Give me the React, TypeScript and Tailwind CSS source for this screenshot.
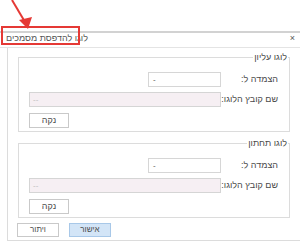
import React from "react";

const LogoGroup: React.FC<{ title: string; className?: string }> = ({ title, className }) => {
  return (
    <div className={`relative ml-[10px] w-[272px] border border-[#dcdcdc] pt-[14px] pb-[3px] pl-[10px] ${className ?? ""}`}>
      <span dir="rtl" className="absolute right-[1px] top-[-7px] bg-white px-[1px] text-[9px] leading-[12px] text-[#4a4a4a]">
        {title}
      </span>
      <div className="flex items-center h-[15px]">
        <div className="flex w-[192px] justify-end">
          <div className="flex h-[15px] w-[73px] items-center border border-[#d6d6d6] bg-white pl-[4px] text-[8px] leading-none text-[#555]">
            -
          </div>
        </div>
        <span dir="rtl" className="flex-1 pr-[11px] text-right text-[9px] text-[#4a4a4a]">
          הצמדה ל:
        </span>
      </div>
      <div className="mt-[5px] flex items-center h-[15px]">
        <div className="flex h-[15px] w-[192px] items-center border border-[#d5d5d5] bg-[#f6eff3] pl-[3px] text-[8px] leading-none text-[#bdbdbd]">
          --
        </div>
        <span dir="rtl" className="flex-1 pr-[11px] text-right text-[9px] text-[#4a4a4a]">
          שם קובץ הלוגו:
        </span>
      </div>
      <button
        type="button"
        className="mt-[6px] flex h-[15px] w-[40px] items-center justify-center border border-[#c9c9c9] bg-white text-[9px] leading-none text-[#4a4a4a]"
      >
        נקה
      </button>
    </div>
  );
};

const App: React.FC = () => {
  return (
    <div
      className="relative h-[242px] w-[300px] overflow-hidden bg-white"
      style={{ fontFamily: '"Liberation Sans", "DejaVu Sans", sans-serif' }}
    >
      <div className="h-[31px]" />
      <div className="border-t-2 border-[#d2d2d2]">
        {/* title bar */}
        <div className="flex h-[15px] items-start justify-between border-b border-[#e4e4e4] pt-[1px] pl-[6px] pr-[5px]">
          <span dir="rtl" className="text-[9px] leading-[9px] text-[#555]">
            לוגו להדפסת מסמכים
          </span>
          <span className="text-[9px] leading-[9px] text-[#555]">×</span>
        </div>
        {/* body */}
        <div className="ml-[7px] border-b border-l border-[#dcdcdc] pt-[9px] pb-[3px]">
          <LogoGroup title="לוגו עליון" />
          <LogoGroup title="לוגו תחתון" className="mt-[11px]" />
          <div className="mt-[5px] ml-[9px] flex gap-[10px]">
            <button
              type="button"
              className="flex h-[14px] w-[42px] items-center justify-center border border-[#c9c9c9] bg-white text-[8px] leading-none text-[#4a4a4a]"
            >
              ויתור
            </button>
            <button
              type="button"
              className="flex h-[14px] w-[42px] items-center justify-center border border-[#a8c8e8] bg-[#d3e5f7] text-[8px] leading-none text-[#4a4a4a]"
            >
              אישור
            </button>
          </div>
        </div>
      </div>

      {/* annotation: red arrow and highlight box */}
      <svg className="absolute left-0 top-0" width="40" height="32" viewBox="0 0 40 32">
        <line x1="12" y1="0" x2="25" y2="22" stroke="#e53935" strokeWidth="2" />
        <polygon points="19,20 32,17 28,29" fill="#e53935" />
      </svg>
      <div className="absolute left-[1px] top-[26px] h-[19px] w-[79px] border-2 border-[#e53935]" />
    </div>
  );
};

export default App;
